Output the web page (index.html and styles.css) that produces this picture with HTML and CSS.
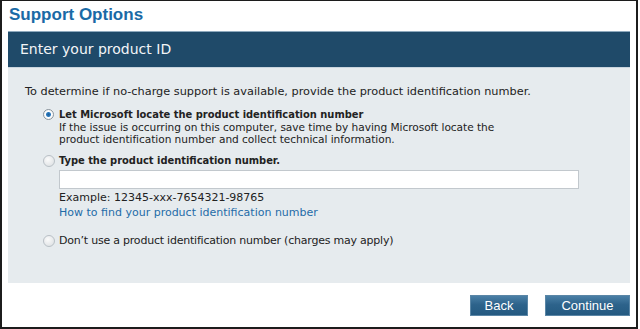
FILE: index.html
```html
<!DOCTYPE html>
<html lang="en">
<head>
  <meta charset="UTF-8">
  <title>Support Options</title>
  <link rel="stylesheet" href="styles.css">
</head>
<body>

<div class="frame">
  <h1 class="title">Support Options</h1>

  <div class="panel">
    <div class="panel-head">Enter your product ID</div>
    <div class="panel-body">
      <p class="intro">To determine if no-charge support is available, provide the product identification number.</p>

      <div class="option">
        <span class="radio checked"></span>
        <div class="option-text">
          <div class="label strong">Let Microsoft locate the product identification number</div>
          <div class="desc">If the issue is occurring on this computer, save time by having Microsoft locate the product identification number and collect technical information.</div>
        </div>
      </div>

      <div class="option">
        <span class="radio"></span>
        <div class="option-text">
          <div class="label strong">Type the product identification number.</div>
          <input type="text" class="pid">
          <div class="example">Example: 12345-xxx-7654321-98765</div>
          <a class="help" href="#">How to find your product identification number</a>
        </div>
      </div>

      <div class="option">
        <span class="radio"></span>
        <div class="option-text">
          <div class="label plain">Don’t use a product identification number (charges may apply)</div>
        </div>
      </div>
    </div>
  </div>

  <div class="actions">
    <button class="btn back">Back</button>
    <button class="btn next">Continue</button>
  </div>
</div>

</body>
</html>
```

FILE: styles.css
```css
* {
  margin: 0;
  padding: 0;
  box-sizing: border-box;
}
body {
  width: 640px;
  height: 329px;
  background: #fff;
  font-family: 'DejaVu Sans', Verdana, sans-serif;
  color: #222;
  overflow: hidden;
}
.frame {
  width: 638px;
  height: 329px;
  border: 2px solid #1c1c1c;
  border-top-width: 1px;
  padding: 4px 6px 0 6px;
}
.title {
  font-family: 'Liberation Sans', Arial, sans-serif;
  font-size: 17px;
  font-weight: bold;
  color: #1a6aa6;
  line-height: 20px;
  height: 26px;
  padding-left: 1px;
}
.panel {
  width: 622px;
  background: #e6ebee;
}
.panel-head {
  background: #1f4a69;
  border-top: 1px solid #8ea9bd;
  border-bottom: 1px solid #c9d5de;
  color: #f2f5f7;
  font-size: 14px;
  height: 37px;
  line-height: 34px;
  padding-left: 12px;
}
.panel-body {
  padding: 17px 17px 0 17px;
  height: 215px;
  font-size: 11px;
}
.intro {
  font-size: 11.3px;
  line-height: 13px;
  margin-bottom: 10px;
}
.option {
  display: flex;
  align-items: flex-start;
  padding-left: 18px;
  margin-bottom: 9px;
}
.radio {
  flex: none;
  width: 12px;
  height: 12px;
  margin: 1px 4px 0 0;
  border-radius: 50%;
  border: 1px solid #b9c0c6;
  background: radial-gradient(circle at 40% 35%, #fbfbfb, #d9dde0);
}
.radio.checked {
  width: 11px;
  height: 11px;
  margin: 1px 5px 0 0;
  border-color: #8a949c;
  background: radial-gradient(circle, #1f5d94 0, #2c7bc0 2px, #ffffff 3px, #e9ecef 100%);
}
.option-text {
  flex: 1;
}
.label {
  line-height: 13px;
}
.strong {
  font-family: 'DejaVu Sans Condensed', 'DejaVu Sans', sans-serif;
  font-weight: bold;
}
.plain {
  letter-spacing: -0.22px;
}
.desc {
  font-size: 10.6px;
  letter-spacing: -0.05px;
  line-height: 12px;
  max-width: 460px;
}
.pid {
  display: block;
  width: 520px;
  height: 19px;
  margin: 3px 0 0 0;
  border: 1px solid #c2c8cd;
  background: #fff;
}
.example {
  line-height: 15px;
  padding-top: 1px;
}
.help {
  display: block;
  color: #1f6ca8;
  text-decoration: none;
  line-height: 15px;
  margin-bottom: 5px;
}
.actions {
  display: flex;
  justify-content: flex-end;
  gap: 17px;
  padding: 12px 0 0 0;
}
.btn {
  font-family: 'Liberation Sans', Arial, sans-serif;
  font-size: 13px;
  color: #fff;
  height: 21px;
  border: 1px solid #5a86a6;
  background: linear-gradient(#4a7fa6, #2d638b 45%, #245a81);
  cursor: pointer;
}
.back {
  width: 58px;
}
.next {
  width: 85px;
}
```
